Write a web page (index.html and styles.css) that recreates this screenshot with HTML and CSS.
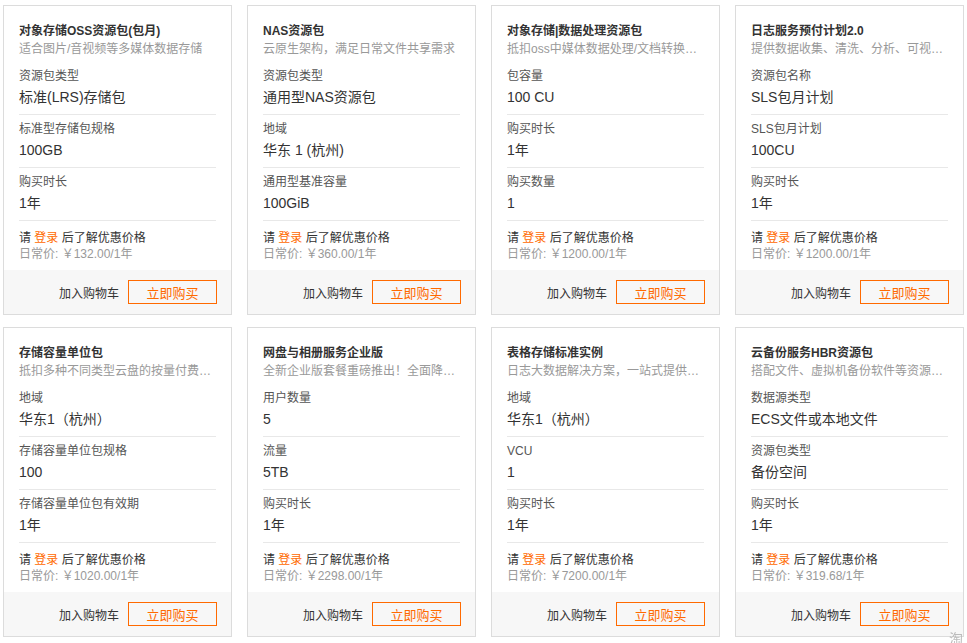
FILE: index.html
```html
<!DOCTYPE html>
<html lang="zh-CN">

<head>
    <meta charset="UTF-8">
    <meta name="viewport" content="width=device-width, initial-scale=1.0">
    <title>资源包</title>
    <link rel="stylesheet" href="styles.css">
</head>

<body>
    <div class="pkg-list">
        <div class="pkg-card">
            <div class="pkg-head">
                <div class="pkg-title">对象存储OSS资源包(包月)</div>
                <div class="pkg-desc">适合图片/音视频等多媒体数据存储</div>
            </div>
            <div class="pkg-item">
                <div class="pkg-label">资源包类型</div>
                <div class="pkg-value">标准(LRS)存储包</div>
            </div>
            <div class="pkg-item">
                <div class="pkg-label">标准型存储包规格</div>
                <div class="pkg-value">100GB</div>
            </div>
            <div class="pkg-item">
                <div class="pkg-label">购买时长</div>
                <div class="pkg-value">1年</div>
            </div>
            <div class="pkg-price">
                <div class="price-tip">请 <a href="#" class="login">登录</a> 后了解优惠价格</div>
                <div class="price-normal">日常价: ￥132.00/1年</div>
            </div>
            <div class="pkg-foot">
                <a href="#" class="add-cart">加入购物车</a>
                <a href="#" class="btn-buy">立即购买</a>
            </div>
        </div>

        <div class="pkg-card">
            <div class="pkg-head">
                <div class="pkg-title">NAS资源包</div>
                <div class="pkg-desc">云原生架构，满足日常文件共享需求</div>
            </div>
            <div class="pkg-item">
                <div class="pkg-label">资源包类型</div>
                <div class="pkg-value">通用型NAS资源包</div>
            </div>
            <div class="pkg-item">
                <div class="pkg-label">地域</div>
                <div class="pkg-value">华东 1 (杭州)</div>
            </div>
            <div class="pkg-item">
                <div class="pkg-label">通用型基准容量</div>
                <div class="pkg-value">100GiB</div>
            </div>
            <div class="pkg-price">
                <div class="price-tip">请 <a href="#" class="login">登录</a> 后了解优惠价格</div>
                <div class="price-normal">日常价: ￥360.00/1年</div>
            </div>
            <div class="pkg-foot">
                <a href="#" class="add-cart">加入购物车</a>
                <a href="#" class="btn-buy">立即购买</a>
            </div>
        </div>

        <div class="pkg-card">
            <div class="pkg-head">
                <div class="pkg-title">对象存储|数据处理资源包</div>
                <div class="pkg-desc">抵扣oss中媒体数据处理/文档转换等费用</div>
            </div>
            <div class="pkg-item">
                <div class="pkg-label">包容量</div>
                <div class="pkg-value">100 CU</div>
            </div>
            <div class="pkg-item">
                <div class="pkg-label">购买时长</div>
                <div class="pkg-value">1年</div>
            </div>
            <div class="pkg-item">
                <div class="pkg-label">购买数量</div>
                <div class="pkg-value">1</div>
            </div>
            <div class="pkg-price">
                <div class="price-tip">请 <a href="#" class="login">登录</a> 后了解优惠价格</div>
                <div class="price-normal">日常价: ￥1200.00/1年</div>
            </div>
            <div class="pkg-foot">
                <a href="#" class="add-cart">加入购物车</a>
                <a href="#" class="btn-buy">立即购买</a>
            </div>
        </div>

        <div class="pkg-card">
            <div class="pkg-head">
                <div class="pkg-title">日志服务预付计划2.0</div>
                <div class="pkg-desc">提供数据收集、清洗、分析、可视化和告警功能</div>
            </div>
            <div class="pkg-item">
                <div class="pkg-label">资源包名称</div>
                <div class="pkg-value">SLS包月计划</div>
            </div>
            <div class="pkg-item">
                <div class="pkg-label">SLS包月计划</div>
                <div class="pkg-value">100CU</div>
            </div>
            <div class="pkg-item">
                <div class="pkg-label">购买时长</div>
                <div class="pkg-value">1年</div>
            </div>
            <div class="pkg-price">
                <div class="price-tip">请 <a href="#" class="login">登录</a> 后了解优惠价格</div>
                <div class="price-normal">日常价: ￥1200.00/1年</div>
            </div>
            <div class="pkg-foot">
                <a href="#" class="add-cart">加入购物车</a>
                <a href="#" class="btn-buy">立即购买</a>
            </div>
        </div>

        <div class="pkg-card">
            <div class="pkg-head">
                <div class="pkg-title">存储容量单位包</div>
                <div class="pkg-desc">抵扣多种不同类型云盘的按量付费账单</div>
            </div>
            <div class="pkg-item">
                <div class="pkg-label">地域</div>
                <div class="pkg-value">华东1（杭州）</div>
            </div>
            <div class="pkg-item">
                <div class="pkg-label">存储容量单位包规格</div>
                <div class="pkg-value">100</div>
            </div>
            <div class="pkg-item">
                <div class="pkg-label">存储容量单位包有效期</div>
                <div class="pkg-value">1年</div>
            </div>
            <div class="pkg-price">
                <div class="price-tip">请 <a href="#" class="login">登录</a> 后了解优惠价格</div>
                <div class="price-normal">日常价: ￥1020.00/1年</div>
            </div>
            <div class="pkg-foot">
                <a href="#" class="add-cart">加入购物车</a>
                <a href="#" class="btn-buy">立即购买</a>
            </div>
        </div>

        <div class="pkg-card">
            <div class="pkg-head">
                <div class="pkg-title">网盘与相册服务企业版</div>
                <div class="pkg-desc">全新企业版套餐重磅推出！全面降价，限时优惠</div>
            </div>
            <div class="pkg-item">
                <div class="pkg-label">用户数量</div>
                <div class="pkg-value">5</div>
            </div>
            <div class="pkg-item">
                <div class="pkg-label">流量</div>
                <div class="pkg-value">5TB</div>
            </div>
            <div class="pkg-item">
                <div class="pkg-label">购买时长</div>
                <div class="pkg-value">1年</div>
            </div>
            <div class="pkg-price">
                <div class="price-tip">请 <a href="#" class="login">登录</a> 后了解优惠价格</div>
                <div class="price-normal">日常价: ￥2298.00/1年</div>
            </div>
            <div class="pkg-foot">
                <a href="#" class="add-cart">加入购物车</a>
                <a href="#" class="btn-buy">立即购买</a>
            </div>
        </div>

        <div class="pkg-card">
            <div class="pkg-head">
                <div class="pkg-title">表格存储标准实例</div>
                <div class="pkg-desc">日志大数据解决方案，一站式提供数据采集</div>
            </div>
            <div class="pkg-item">
                <div class="pkg-label">地域</div>
                <div class="pkg-value">华东1（杭州）</div>
            </div>
            <div class="pkg-item">
                <div class="pkg-label">VCU</div>
                <div class="pkg-value">1</div>
            </div>
            <div class="pkg-item">
                <div class="pkg-label">购买时长</div>
                <div class="pkg-value">1年</div>
            </div>
            <div class="pkg-price">
                <div class="price-tip">请 <a href="#" class="login">登录</a> 后了解优惠价格</div>
                <div class="price-normal">日常价: ￥7200.00/1年</div>
            </div>
            <div class="pkg-foot">
                <a href="#" class="add-cart">加入购物车</a>
                <a href="#" class="btn-buy">立即购买</a>
            </div>
        </div>

        <div class="pkg-card">
            <div class="pkg-head">
                <div class="pkg-title">云备份服务HBR资源包</div>
                <div class="pkg-desc">搭配文件、虚拟机备份软件等资源包使用</div>
            </div>
            <div class="pkg-item">
                <div class="pkg-label">数据源类型</div>
                <div class="pkg-value">ECS文件或本地文件</div>
            </div>
            <div class="pkg-item">
                <div class="pkg-label">资源包类型</div>
                <div class="pkg-value">备份空间</div>
            </div>
            <div class="pkg-item">
                <div class="pkg-label">购买时长</div>
                <div class="pkg-value">1年</div>
            </div>
            <div class="pkg-price">
                <div class="price-tip">请 <a href="#" class="login">登录</a> 后了解优惠价格</div>
                <div class="price-normal">日常价: ￥319.68/1年</div>
            </div>
            <div class="pkg-foot">
                <a href="#" class="add-cart">加入购物车</a>
                <a href="#" class="btn-buy">立即购买</a>
            </div>
        </div>
    </div>

    <div class="float-tab">淘</div>
</body>

</html>
```

FILE: styles.css
```css
body {
    font-family: "Liberation Sans", "Noto Sans CJK SC", sans-serif;
    margin: 0;
    padding: 5px 3px;
    color: #333;
    background: #fff;
    font-size: 12px;
    overflow: hidden;
}

a {
    text-decoration: none;
}

.pkg-list {
    display: grid;
    grid-template-columns: repeat(4, 229px);
    column-gap: 15px;
    row-gap: 12px;
}

.pkg-card {
    border: 1px solid #dcdcdc;
    background: #fff;
}

.pkg-head {
    padding: 16px 15px 0;
    margin-bottom: 4px;
}

.pkg-title {
    font-weight: bold;
    line-height: 18px;
    color: #333;
}

.pkg-desc {
    line-height: 18px;
    color: #999;
    white-space: nowrap;
    overflow: hidden;
    text-overflow: ellipsis;
}

.pkg-item {
    margin: 0 15px;
    padding: 5px 0 4px;
    border-bottom: 1px solid #e8e8e8;
}

.pkg-label {
    line-height: 18px;
    color: #555;
}

.pkg-value {
    font-size: 14px;
    line-height: 25px;
    color: #333;
}

.pkg-price {
    padding: 9px 15px 8px;
}

.price-tip {
    line-height: 16px;
    color: #333;
}

.login {
    color: #ff6a00;
}

.price-normal {
    line-height: 16px;
    color: #999;
}

.pkg-foot {
    display: flex;
    justify-content: flex-end;
    align-items: center;
    height: 44px;
    padding-right: 14px;
    background: #f7f7f7;
}

.add-cart {
    color: #333;
    margin-right: 9px;
}

.btn-buy {
    display: flex;
    justify-content: center;
    align-items: center;
    box-sizing: border-box;
    width: 89px;
    height: 24px;
    border: 1px solid #ff6a00;
    color: #ff6a00;
    font-size: 13px;
}

.float-tab {
    position: fixed;
    left: 949px;
    top: 632px;
    font-size: 14px;
    line-height: 14px;
    color: #bbb;
}
```
